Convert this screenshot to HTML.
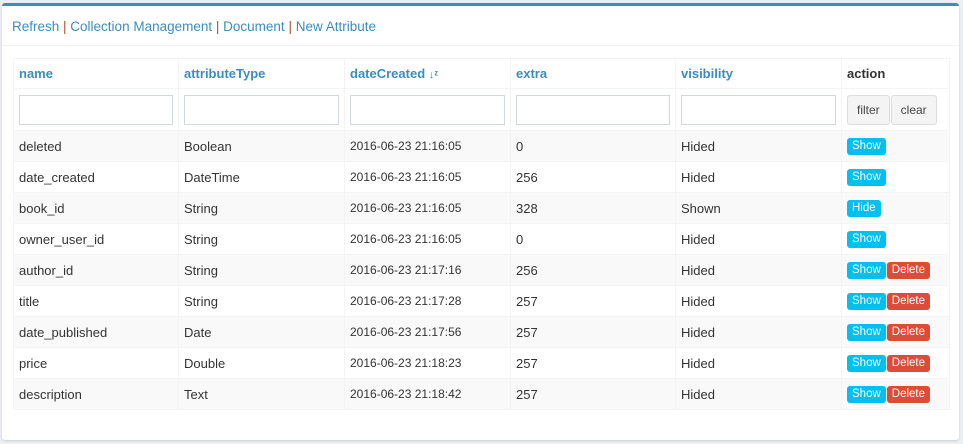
<!DOCTYPE html>
<html><head><style>
*{box-sizing:border-box}
body{margin:0;background:#ecf0f5;font-family:"Liberation Sans",sans-serif;font-size:13px;color:#333;width:963px;height:444px;overflow:hidden}
.box{position:absolute;left:2px;top:3px;width:957px;height:437px;background:#fff;border-top:3px solid #3c8dbc;border-radius:3px;box-shadow:0 1px 2px rgba(0,0,0,.15)}
.hdr{height:40px;border-bottom:1px solid #f4f4f4;padding:13px 0 0 10px;font-size:13.5px;color:#3c8dbc}
.hdr .s{color:#b0502f}
table{position:absolute;left:11px;top:52px;border-collapse:collapse;width:937px;table-layout:fixed}
td,th{border:1px solid #f4f4f4;padding:0 5px;text-align:left;height:31px;white-space:nowrap;overflow:hidden}
th{height:30px;font-weight:bold;color:#3c8dbc}
th.a{color:#333}
tr.f td{height:42px}
tbody tr:nth-child(odd){background:#f9f9f9}
input{width:100%;height:30px;border:1px solid #d2d6de;display:block}
.btn{display:inline-block;background:#f4f4f4;border:1px solid #ddd;border-radius:3px;height:30px;line-height:28px;padding:0 9px;font-size:12px;color:#444;margin-right:1px}
.b{display:inline-block;vertical-align:middle;color:#fff;font-size:11.5px;height:17px;line-height:17px;padding:0 5px;border-radius:3px;background:#00c0ef}
.d{background:#dd4b39;margin-left:1px}
.dt{font-size:12px}
</style></head><body>
<div class="box">
<div class="hdr">Refresh <span class="s">|</span> Collection Management <span class="s">|</span> Document <span class="s">|</span> New Attribute</div>
<table>
<colgroup><col style="width:165px"><col style="width:166px"><col style="width:166px"><col style="width:165px"><col style="width:166px"><col></colgroup>
<thead>
<tr><th>name</th><th>attributeType</th><th>dateCreated <span style="font-size:11px">↓ᶻ</span></th><th>extra</th><th>visibility</th><th class="a">action</th></tr>
<tr class="f"><td><input></td><td><input></td><td><input></td><td><input></td><td><input></td><td><span class="btn">filter</span><span class="btn">clear</span></td></tr>
</thead>
<tbody>
<tr><td>deleted</td><td>Boolean</td><td class="dt">2016-06-23 21:16:05</td><td>0</td><td>Hided</td><td><span class="b">Show</span></td></tr>
<tr><td>date_created</td><td>DateTime</td><td class="dt">2016-06-23 21:16:05</td><td>256</td><td>Hided</td><td><span class="b">Show</span></td></tr>
<tr><td>book_id</td><td>String</td><td class="dt">2016-06-23 21:16:05</td><td>328</td><td>Shown</td><td><span class="b">Hide</span></td></tr>
<tr><td>owner_user_id</td><td>String</td><td class="dt">2016-06-23 21:16:05</td><td>0</td><td>Hided</td><td><span class="b">Show</span></td></tr>
<tr><td>author_id</td><td>String</td><td class="dt">2016-06-23 21:17:16</td><td>256</td><td>Hided</td><td><span class="b">Show</span><span class="b d">Delete</span></td></tr>
<tr><td>title</td><td>String</td><td class="dt">2016-06-23 21:17:28</td><td>257</td><td>Hided</td><td><span class="b">Show</span><span class="b d">Delete</span></td></tr>
<tr><td>date_published</td><td>Date</td><td class="dt">2016-06-23 21:17:56</td><td>257</td><td>Hided</td><td><span class="b">Show</span><span class="b d">Delete</span></td></tr>
<tr><td>price</td><td>Double</td><td class="dt">2016-06-23 21:18:23</td><td>257</td><td>Hided</td><td><span class="b">Show</span><span class="b d">Delete</span></td></tr>
<tr><td>description</td><td>Text</td><td class="dt">2016-06-23 21:18:42</td><td>257</td><td>Hided</td><td><span class="b">Show</span><span class="b d">Delete</span></td></tr>
</tbody>
</table>
</div>
</body></html>
